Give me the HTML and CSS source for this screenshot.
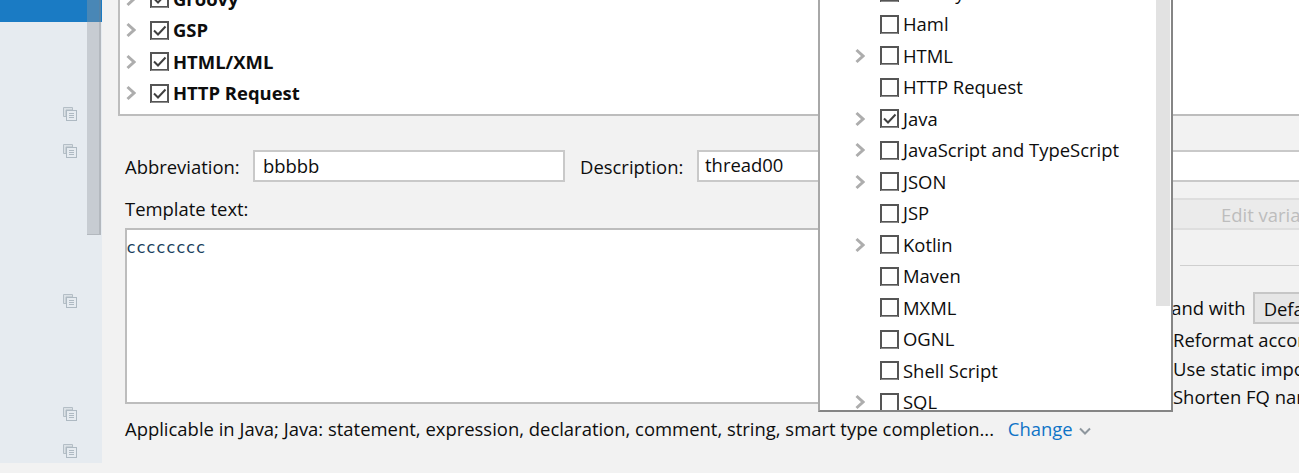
FILE: index.html
```html
<!DOCTYPE html>
<html lang="en">
<head>
<meta charset="utf-8">
<title>Live Template</title>
<link rel="stylesheet" href="styles.css">
</head>
<body>
<svg class="defs" width="0" height="0">
  <symbol id="chev" viewBox="0 0 10 16"><path d="M1.500 2l6.500 6-6.500 6" fill="none" stroke="#adadad" stroke-width="3"/></symbol>
  <symbol id="box" viewBox="0 0 19 19"><rect x="1" y="1" width="17" height="17" fill="#fff" stroke="#555" stroke-width="2"/><path d="M1 18.500h17" stroke="#8c8c8c" stroke-width="1"/></symbol>
  <symbol id="boxc" viewBox="0 0 19 19"><rect x="1" y="1" width="17" height="17" fill="#fff" stroke="#555" stroke-width="2"/><path d="M1 18.500h17" stroke="#8c8c8c" stroke-width="1"/><path d="M4 9.500l4 4 7.500-8" fill="none" stroke="#404040" stroke-width="2"/></symbol>
  <symbol id="copy" viewBox="0 0 14 14"><path d="M.5.5h9v2.500h-6.500v6.500h-2.500z" fill="#dbe1e6" stroke="#b4bec6"/><rect x="3.500" y="3.500" width="10" height="10" fill="#e6ebf0" stroke="#aeb9c2"/><path d="M6 6.500h5M6 8.500h5M6 10.500h5" stroke="#aeb9c2"/></symbol>
</svg>
<div class="app">
  <aside class="side">
    <div class="side-sel"></div>
    <div class="side-list">
      <div class="side-row"><svg class="ic"><use href="#copy"/></svg></div>
      <div class="side-row"><svg class="ic"><use href="#copy"/></svg></div>
      <div class="side-row"></div>
      <div class="side-row"></div>
      <div class="side-row"></div>
      <div class="side-row"><svg class="ic"><use href="#copy"/></svg></div>
      <div class="side-row"></div>
      <div class="side-row"></div>
      <div class="side-row"><svg class="ic"><use href="#copy"/></svg></div>
      <div class="side-row"><svg class="ic"><use href="#copy"/></svg></div>
    </div>
    <div class="side-scroll"></div>
  </aside>
  <main class="main">
    <section class="tree">
      <div class="row"><svg class="chev"><use href="#chev"/></svg><svg class="cb"><use href="#boxc"/></svg><b>Groovy</b></div>
      <div class="row"><svg class="chev"><use href="#chev"/></svg><svg class="cb"><use href="#boxc"/></svg><b>GSP</b></div>
      <div class="row"><svg class="chev"><use href="#chev"/></svg><svg class="cb"><use href="#boxc"/></svg><b>HTML/XML</b></div>
      <div class="row"><svg class="chev"><use href="#chev"/></svg><svg class="cb"><use href="#boxc"/></svg><b>HTTP Request</b></div>
    </section>
    <section class="fields">
      <label class="lbl-abbr">Abbreviation:</label>
      <div class="input abbr">bbbbb</div>
      <label class="lbl-desc">Description:</label>
      <div class="input desc">thread00</div>
    </section>
    <section class="body">
      <div class="left">
        <div class="tlabel">Template text:</div>
        <div class="code">cccccccc</div>
        <div class="applic">Applicable in Java; Java: statement, expression, declaration, comment, string, smart type completion... <a class="change">Change</a><svg class="down" viewBox="0 0 12 8"><path d="M1 1.500l5 5 5-5" fill="none" stroke="#8e979e" stroke-width="2"/></svg></div>
      </div>
      <div class="right">
        <div class="editvar">Edit variables</div>
        <hr class="sep">
        <div class="expand"><span>Expand with</span><span class="combo">Default</span></div>
        <div class="opt opt1">Reformat according to style</div>
        <div class="opt">Use static import if possible</div>
        <div class="opt">Shorten FQ names</div>
      </div>
    </section>
  </main>
</div>
<div class="popup">
  <div class="pop-scroll"></div>
  <div class="prow"><svg class="cb"><use href="#box"/></svg>Groovy</div>
  <div class="prow"><svg class="cb"><use href="#box"/></svg>Haml</div>
  <div class="prow"><svg class="chev"><use href="#chev"/></svg><svg class="cb"><use href="#box"/></svg>HTML</div>
  <div class="prow"><svg class="cb"><use href="#box"/></svg>HTTP Request</div>
  <div class="prow"><svg class="chev"><use href="#chev"/></svg><svg class="cb"><use href="#boxc"/></svg>Java</div>
  <div class="prow"><svg class="chev"><use href="#chev"/></svg><svg class="cb"><use href="#box"/></svg>JavaScript and TypeScript</div>
  <div class="prow"><svg class="chev"><use href="#chev"/></svg><svg class="cb"><use href="#box"/></svg>JSON</div>
  <div class="prow"><svg class="cb"><use href="#box"/></svg>JSP</div>
  <div class="prow"><svg class="chev"><use href="#chev"/></svg><svg class="cb"><use href="#box"/></svg>Kotlin</div>
  <div class="prow"><svg class="cb"><use href="#box"/></svg>Maven</div>
  <div class="prow"><svg class="cb"><use href="#box"/></svg>MXML</div>
  <div class="prow"><svg class="cb"><use href="#box"/></svg>OGNL</div>
  <div class="prow"><svg class="cb"><use href="#box"/></svg>Shell Script</div>
  <div class="prow"><svg class="chev"><use href="#chev"/></svg><svg class="cb"><use href="#box"/></svg>SQL</div>
</div>
</body>
</html>
```
FILE: styles.css
```css
* { box-sizing: border-box; }
html, body { margin: 0; height: 100%; overflow: hidden; }
body {
  width: 1299px;
  height: 473px;
  position: relative;
  background: #f2f2f2;
  color: #0d0d0d;
  font: 18.45px/24px "Open Sans", "Noto Sans", sans-serif;
}
.defs { position: absolute; }
.app { display: flex; height: 473px; overflow: hidden; }

.side { position: relative; flex: 0 0 102px; height: 463px; background: #e6ebf0; }
.side-sel { height: 22px; background: #1a7bc4; }
.side-list { padding-top: 72.75px; }
.side-row { display: flex; align-items: center; height: 37.5px; padding-left: 63px; }
.ic { width: 14px; height: 14px; }
.side-scroll {
  position: absolute; top: 0; left: 87px;
  width: 14px; height: 235px;
  background: rgba(150, 155, 160, .38);
  border-right: 2px solid rgba(120, 125, 130, .25);
  border-bottom: 1px solid rgba(120, 125, 130, .25);
}

.main { flex: 1; min-width: 0; padding-left: 16px; }
.tree {
  margin-top: -17px;
  height: 133px;
  padding-left: 6px;
  background: #fff;
  border-left: 2px solid #bdbdbd;
  border-bottom: 2px solid #bdbdbd;
}
.row { display: flex; align-items: center; height: 31.5px; }
.row .chev { margin-right: 14px; }
.row b { margin-left: 4px; font-weight: 700; }
.chev { flex: none; width: 10px; height: 16px; }
.cb { flex: none; width: 19px; height: 19px; }

.fields { display: flex; align-items: center; height: 32px; margin-top: 34px; margin-left: 7px; }
.fields label { position: relative; top: 1px; flex: none; }
.lbl-abbr { width: 128px; }
.lbl-desc { width: 117px; }
.input { flex: none; height: 32px; padding-left: 8px; line-height: 28px; background: #fff; border: 2px solid #c9c9c9; }
.abbr { width: 312px; margin-right: 15px; }
.desc { width: 700px; padding-left: 6px; line-height: 26px; }

.body { display: flex; margin-left: 7px; }
.left { flex: 0 0 966px; min-width: 0; }
.tlabel { height: 24px; margin-top: 15px; margin-bottom: 7px; line-height: 24px; }
.code {
  height: 176px;
  padding: 6px 0 0;
  text-indent: -1px;
  background: #fff;
  border: 2px solid #bdbdbd;
  font: 16.500px/24px "DejaVu Sans Mono", monospace;
  color: #17405c;
}
.applic { margin-top: 13px; white-space: nowrap; }
.change { margin-left: 9px; color: #0f74c7; }
.down { width: 12px; height: 8px; margin-left: 6px; vertical-align: 1px; }

.right { flex: none; width: 300px; margin-left: 77px; }
.editvar {
  height: 32px; margin-top: 16px;
  padding-left: 53px;
  line-height: 30px;
  background: #ebebeb;
  border: 2px solid #dedede;
  border-width: 2px 0;
  color: #bdbdbd;
  white-space: nowrap;
}
.sep { height: 1px; margin: 35px 0 0 12px; border: 0; background: #cfcfcf; }
.expand { display: flex; align-items: center; gap: 7px; height: 32px; margin-top: 26px; margin-left: -28px; white-space: nowrap; }
.combo { height: 32px; padding-left: 9px; width: 120px; line-height: 29px; background: #e6e6e6; border: 2px solid #c6c6c6; }
.opt { height: 28.500px; line-height: 28.500px; white-space: nowrap; margin-left: 5px; }
.opt1 { margin-top: 2px; }

.popup {
  position: absolute;
  top: -25px; left: 818px;
  width: 355px; height: 437px;
  padding-left: 35px;
  overflow: hidden;
  background: #fff;
  border: 2px solid #858585;
  border-left-color: #a8a8a8;
}
.pop-scroll { position: absolute; top: 0; right: 1px; width: 14px; height: 329px; background: #e2e2e2; }
.prow { display: flex; align-items: center; height: 31.5px; white-space: nowrap; }
.prow .cb { margin-right: 4px; margin-left: 25px; }
.prow .chev { margin-right: 15px; }
.prow .chev + .cb { margin-left: 0; }
```
